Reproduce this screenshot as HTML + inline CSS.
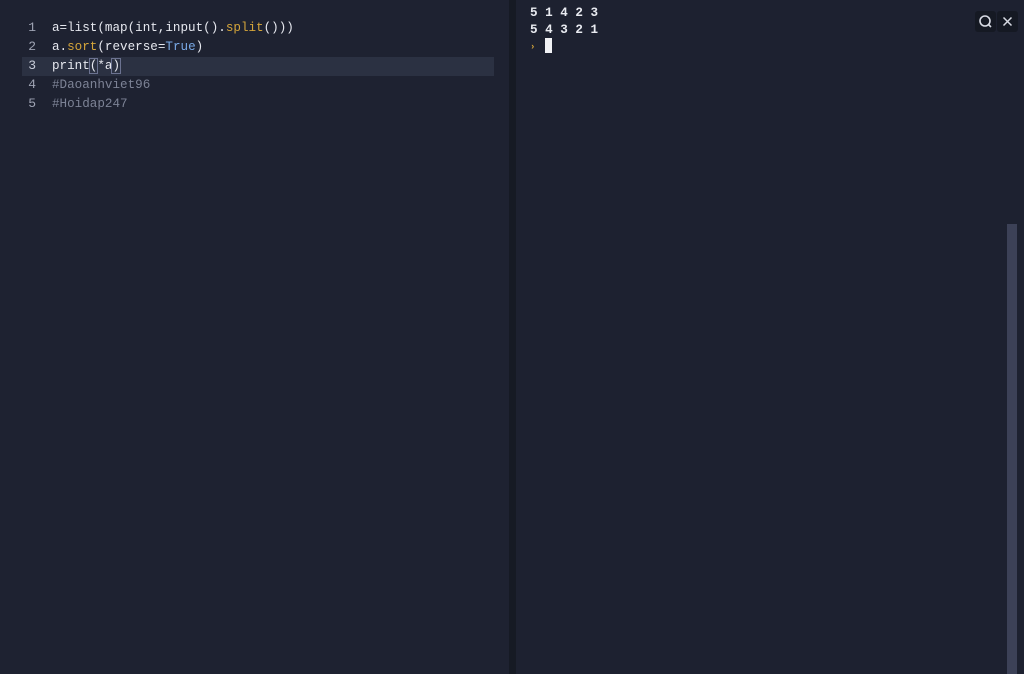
<!DOCTYPE html>
<html><head><style>
body{margin:0;width:1024px;height:674px;background:#1c2130;overflow:hidden;position:relative;font-family:"Liberation Mono",monospace}
.ed{position:absolute;left:0;top:0;width:509px;height:674px;background:#1e2231}
.div{position:absolute;left:509px;top:0;width:7px;height:674px;background:#161a24}
.term{position:absolute;left:516px;top:0;width:508px;height:674px;background:#1d2130}
.ln{position:absolute;left:0;width:40px;text-align:right;color:#9ea3b3;font-size:13px}
.code{position:absolute;left:52px;font-size:12.6px;color:#e6e8ef;white-space:pre;line-height:19px}
.hl{position:absolute;left:22px;top:57px;width:472px;height:19px;background:#2b3142}
.y{color:#d5a53a}.b{color:#79a9e6}.c{color:#7d8396}
.t{position:absolute;left:530px;font-size:12.6px;font-weight:bold;color:#e9ebf1;white-space:pre}
.btn{position:absolute;top:11px;width:21px;height:21px;background:#151923;border-radius:3px;color:#cfd3dd;text-align:center}
</style></head><body>
<div class="ed"></div><div class="div"></div><div class="term"></div>
<div class="hl"></div>
<div class="ln" style="top:20px;left:-4px">1</div>
<div class="ln" style="top:39px;left:-4px">2</div>
<div class="ln" style="top:58px;left:-4px;color:#c7ccd8">3</div>
<div class="ln" style="top:77px;left:-4px">4</div>
<div class="ln" style="top:96px;left:-4px">5</div>
<div class="code" style="top:19px">a=list(map(int,input().<span class="y">split</span>()))</div>
<div class="code" style="top:38px">a.<span class="y">sort</span>(reverse=<span class="b">True</span>)</div>
<div class="code" style="top:57px">print<span style="outline:1px solid #6b7290">(</span>*a<span style="outline:1px solid #6b7290">)</span></div>
<div class="code c" style="top:76px">#Daoanhviet96</div>
<div class="code c" style="top:95px">#Hoidap247</div>
<div class="t" style="top:6px">5 1 4 2 3</div>
<div class="t" style="top:23px">5 4 3 2 1</div>
<div class="t" style="color:#d5a53a;font-size:9px;top:42px">›</div>
<div style="position:absolute;left:545px;top:38px;width:7px;height:15px;background:#f1f2f5"></div>
<div class="btn" style="left:975px"><svg width="21" height="21"><circle cx="10" cy="10" r="5" fill="none" stroke="#d7dae3" stroke-width="1.6"/><path d="M13.5 13.5L16 16" stroke="#d7dae3" stroke-width="1.6"/></svg></div>
<div class="btn" style="left:997px"><svg width="21" height="21"><path d="M6.5 6.5L14.5 14.5M14.5 6.5L6.5 14.5" stroke="#d7dae3" stroke-width="1.5"/></svg></div>
<div style="position:absolute;left:1007px;top:224px;width:10px;height:450px;background:#3c4157"></div>
</body></html>
